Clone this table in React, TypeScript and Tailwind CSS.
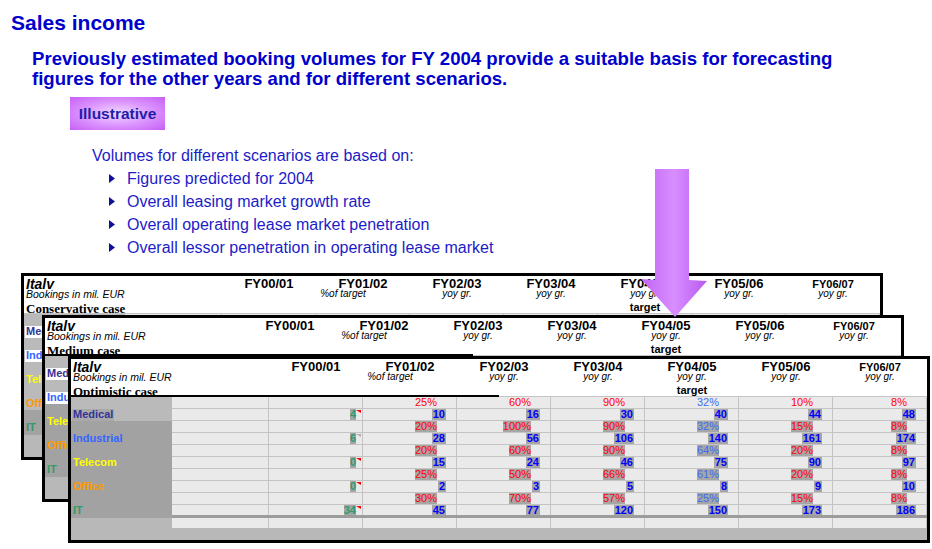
import React from "react";

type Segment = {
  name: string;
  color: string;
  base: string;
  pct: string[];
  vals: string[];
};

const SEGMENTS: Segment[] = [
  { name: "Medical", color: "text-[#333399]", base: "4", pct: ["25%", "60%", "90%", "32%", "10%", "8%"], vals: ["10", "16", "30", "40", "44", "48"] },
  { name: "Industrial", color: "text-[#3366ff]", base: "6", pct: ["20%", "100%", "90%", "32%", "15%", "8%"], vals: ["28", "56", "106", "140", "161", "174"] },
  { name: "Telecom", color: "text-[#ffff00]", base: "0", pct: ["20%", "60%", "90%", "64%", "20%", "8%"], vals: ["15", "24", "46", "75", "90", "97"] },
  { name: "Office", color: "text-[#ff9900]", base: "0", pct: ["25%", "50%", "66%", "61%", "20%", "8%"], vals: ["2", "3", "5", "8", "9", "10"] },
  { name: "IT", color: "text-[#339966]", base: "34", pct: ["30%", "70%", "57%", "25%", "15%", "8%"], vals: ["45", "77", "120", "150", "173", "186"] },
];

const YEARS = ["FY00/01", "FY01/02", "FY02/03", "FY03/04", "FY04/05", "FY05/06", "FY06/07"];

const BULLETS = [
  "Figures predicted for 2004",
  "Overall leasing market growth rate",
  "Overall operating lease market penetration",
  "Overall lessor penetration in operating lease market",
];

const CELL = "bg-[#eaeaea] border-r border-b border-[#c4c4c4] flex justify-end";

function HeaderColumn({ year, index }: { year: string; index: number }) {
  return (
    <div className="flex flex-col items-center pt-[2px]">
      <div className={index === 6 ? "text-[11px] leading-[12px] font-bold" : "text-[13px] leading-[12px] font-bold"}>
        {year}
      </div>
      {index === 1 && <div className="mr-[40px] text-[10px] leading-[8px] italic">%of target</div>}
      {index > 1 && <div className="text-[10px] leading-[8px] italic">yoy gr.</div>}
      {index === 4 && <div className="mt-[3px] text-[11px] leading-[12px] font-bold">target</div>}
    </div>
  );
}

type PanelProps = {
  caseName: string;
  pos: string;
  lightRows: number;
  labelBoxes: (string | null)[];
  divider: boolean;
};

function CasePanel({ caseName, pos, lightRows, labelBoxes, divider }: PanelProps) {
  return (
    <div className={`absolute ${pos} w-[862px] h-[187px] border-[3px] border-black bg-white flex flex-col`}>
      {/* header */}
      <div className="relative h-[38px] shrink-0 overflow-hidden grid grid-cols-[198px_repeat(7,94px)]">
        <div className="pl-[2px] pt-[2px] flex flex-col">
          <div className="text-[14px] leading-[12px] font-bold italic">Italv</div>
          <div className="text-[10.5px] leading-[8px] italic">Bookings in mil. EUR</div>
          <div className="mt-[4px] font-['Liberation_Serif',serif] text-[13px] leading-[13px] font-bold">{caseName}</div>
        </div>
        {YEARS.map((y, i) => (
          <HeaderColumn key={y} year={y} index={i} />
        ))}
        <div className="absolute left-0 right-0 bottom-0 h-px bg-[#c4c4c4]" />
        {divider && <div className="absolute left-0 bottom-0 w-[428px] h-[2px] bg-black" />}
      </div>

      {/* body rows */}
      <div className="h-[118px] shrink-0 overflow-hidden">
        {SEGMENTS.map((s, si) => (
          <React.Fragment key={s.name}>
            {/* growth row */}
            <div className="grid grid-cols-[101px_97px_repeat(7,94px)] h-[12px]">
              <div className={si * 2 < lightRows ? "bg-[#bababa]" : "bg-[#a2a2a2]"} />
              <div className={CELL} />
              <div className={CELL} />
              {s.pct.map((p, pi) => (
                <div key={pi} className={`${CELL} pr-[19px]`}>
                  <span
                    className={`h-[11px] text-[11px] leading-[11px] ${pi === 3 ? "text-[#3d6cf5]" : "text-[#ff0000]"} ${si > 0 ? "bg-[#a6a6a6]" : ""}`}
                  >
                    {p}
                  </span>
                </div>
              ))}
            </div>
            {/* volume row */}
            <div className="grid grid-cols-[101px_97px_repeat(7,94px)] h-[12px]">
              <div className={`flex items-start pl-[1px] ${si * 2 + 1 < lightRows ? "bg-[#bababa]" : "bg-[#a2a2a2]"}`}>
                <span
                  className={`h-[12px] px-px text-[11px] leading-[11px] font-bold ${s.color}`}
                  style={labelBoxes[si] ? { backgroundColor: labelBoxes[si] as string } : undefined}
                >
                  {s.name}
                </span>
              </div>
              <div className={CELL} />
              <div className={`${CELL} relative pr-[6px]`}>
                <span className="h-[11px] text-[11px] leading-[11px] font-bold text-[#339966] bg-[#a6a6a6]">{s.base}</span>
                <span
                  className={`absolute right-px top-px w-0 h-0 border-l-[5px] border-l-transparent border-t-[3px] ${si === 1 ? "border-t-[#b0b0b0]" : "border-t-[#ff0000]"}`}
                />
              </div>
              {s.vals.map((v, vi) => (
                <div key={vi} className={`${CELL} pr-[10px]`}>
                  <span className="h-[11px] px-px text-[11px] leading-[11px] font-bold text-[#0000ff] bg-[#a6a6a6]">{v}</span>
                </div>
              ))}
            </div>
          </React.Fragment>
        ))}
      </div>

      {/* frozen split line */}
      <div className="flex h-[3px] shrink-0">
        <div className="w-[101px] bg-[#a2a2a2]" />
        <div className="flex-1 bg-[#9c9c9c]" />
      </div>

      {/* empty trailing row */}
      <div className="grid grid-cols-[101px_97px_repeat(7,94px)] h-[10px] shrink-0">
        <div className="bg-[#b8b8b8]" />
        {YEARS.concat([""]).map((_, i) => (
          <div key={i} className="bg-[#eaeaea] border-r border-[#c4c4c4]" />
        ))}
      </div>

      {/* bottom band */}
      <div className="flex-1 bg-[#b8b8b8]" />
    </div>
  );
}

function DownArrow() {
  return (
    <svg className="absolute left-[636px] top-[165px]" width="76" height="156" viewBox="0 0 76 156">
      <defs>
        <linearGradient id="arrowFill" x1="0" y1="0" x2="1" y2="0">
          <stop offset="0" stopColor="#c264f4" />
          <stop offset="0.5" stopColor="#d88eff" />
          <stop offset="1" stopColor="#b95af0" />
        </linearGradient>
      </defs>
      <polygon points="19,4 53,4 53,115 71,116 39,152 5,114 19,115" fill="url(#arrowFill)" />
    </svg>
  );
}

export default function App() {
  return (
    <div className="relative w-[932px] h-[549px] overflow-hidden bg-white font-['Liberation_Sans',Arial,sans-serif] text-black">
      <div className="pl-[11px] pt-[11px]">
        <h1 className="text-[21px] leading-[24px] font-bold text-[#0000cc]">Sales income</h1>
      </div>

      <p className="mt-[14px] pl-[32px] text-[18.6px] leading-[20px] font-bold text-[#0000cc]">
        Previously estimated booking volumes for FY 2004 provide a suitable basis for forecasting
        <br />
        figures for the other years and for different scenarios.
      </p>

      <div className="mt-[8px] ml-[70px] w-[95px] h-[33px] flex items-center justify-center bg-[radial-gradient(ellipse_at_center,#f3dcff_0%,#dc96ff_50%,#c75ff5_100%)] text-[15.5px] font-bold text-[#1e1ea8]">
        Illustrative
      </div>

      <p className="mt-[14px] pl-[92px] text-[16px] leading-[23px] text-[#1c1cc8]">
        Volumes for different scenarios are based on:
      </p>
      <ul className="pl-[109px]">
        {BULLETS.map((b) => (
          <li key={b} className="flex items-center gap-[12px] text-[16px] leading-[23px] text-[#1c1cc8]">
            <svg width="6" height="9" viewBox="0 0 6 9" className="shrink-0">
              <polygon points="0,0 6,4.5 0,9" fill="#10109a" />
            </svg>
            <span>{b}</span>
          </li>
        ))}
      </ul>

      <CasePanel caseName="Conservative case" pos="left-[21px] top-[273px]" lightRows={8} labelBoxes={["#ffffff", "#ffffff", null, null, null]} divider={false} />
      <CasePanel caseName="Medium case" pos="left-[42px] top-[315px]" lightRows={4} labelBoxes={["#ffffff", "#ffffff", null, null, null]} divider />
      <CasePanel caseName="Optimistic case" pos="left-[68px] top-[356px]" lightRows={2} labelBoxes={["#a9a9a9", null, null, null, null]} divider />

      <DownArrow />
    </div>
  );
}
